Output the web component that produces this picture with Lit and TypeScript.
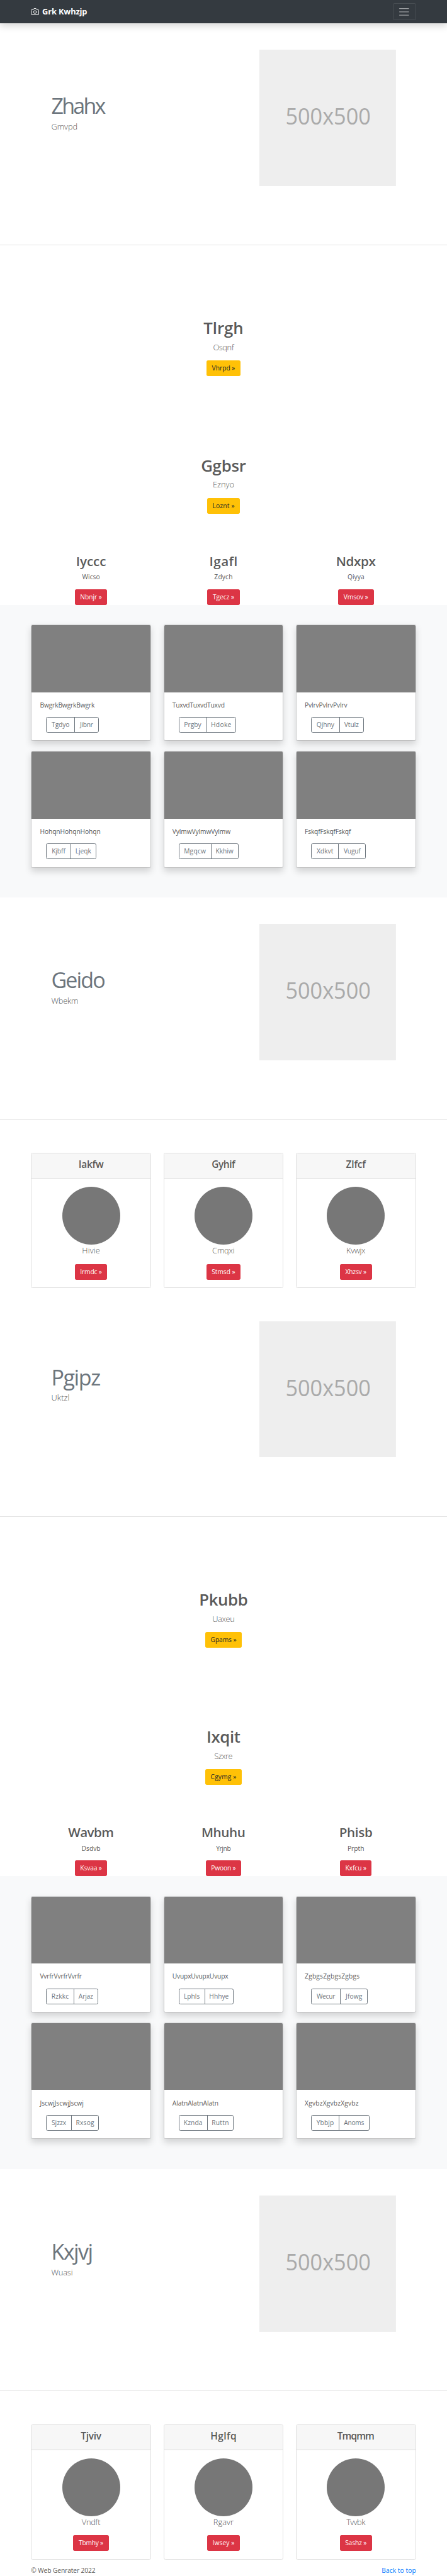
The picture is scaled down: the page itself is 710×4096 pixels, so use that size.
import { LitElement, html, css } from "lit";
import { customElement, property } from "lit/decorators.js";
import { styleMap } from "lit/directives/style-map.js";

type Sized = [label: string, width: number];

const w = (px: number) => styleMap({ width: `${px}px` });

/** Inline label whose tracking is adjusted so that its ink spans a set width. */
@customElement("fit-text")
export class FitText extends LitElement {
  @property() text = "";
  @property({ type: Number }) span = 0;

  static styles = css`
    :host { display: inline-block; white-space: nowrap; }
  `;

  protected updated() {
    const cs = getComputedStyle(this);
    const ctx = document.createElement("canvas").getContext("2d")!;
    ctx.font = `${cs.fontWeight} 100px ${cs.fontFamily}`;
    const m = ctx.measureText(this.text);
    const size = Number(cs.getPropertyValue("--size")) || 16;
    const ink = ((m.actualBoundingBoxRight + m.actualBoundingBoxLeft) * size) / 100;
    const tracking = (this.span - ink) / (this.text.length - 1) / size;
    this.style.letterSpacing = `${tracking}em`;
    this.style.marginRight = `${-tracking}em`;
  }

  render() {
    return html`${this.text}`;
  }
}

const fit = ([text, span]: Sized) => html`<fit-text .text=${text} .span=${span}></fit-text>`;

interface Item {
  title: Sized;
  text: Sized;
  btn: Sized;
}
interface Tile {
  text: Sized;
  first: Sized;
  second: string;
  total: number;
}
interface Block {
  heroes: { title: Sized; lead: Sized }[];
  jumbos: Item[];
  cols: Item[];
  album: Tile[];
  cards: Item[];
}

const item = (title: Sized, text: Sized, btn: Sized): Item => ({ title, text, btn });
const tile = (word: string, span: number, a: string, aw: number, second: string, total: number): Tile => ({
  text: [word.repeat(3), span],
  first: [a, aw],
  second,
  total,
});

const blocks: Block[] = [
  {
    heroes: [
      { title: ["Zhahx", 130], lead: ["Gmvpd", 60.6] },
      { title: ["Geido", 125.5], lead: ["Wbekm", 63.4] },
    ],
    jumbos: [
      item(["Tlrgh", 93], ["Osqnf", 50.3], ["Vhrpd »", 82.6]),
      item(["Ggbsr", 106.8], ["Eznyo", 49], ["Loznt »", 78.5]),
    ],
    cols: [
      item(["Iyccc", 69], ["Wicso", 42], ["Nbnjr »", 78]),
      item(["Igafl", 62.7], ["Zdych", 42.7], ["Tgecz »", 78.5]),
      item(["Ndxpx", 93], ["Qiyya", 38.6], ["Vmsov »", 86]),
    ],
    album: [
      tile("Bwgrk", 130.9, "Tgdyo", 68.5, "Jibnr", 127),
      tile("Tuxvd", 125.3, "Prgby", 66.5, "Hdoke", 139),
      tile("Pvlrv", 101.2, "Qjhny", 68, "Vtulz", 128),
      tile("Hohqn", 144, "Kjbff", 58.5, "Ljeqk", 121),
      tile("Vylmw", 140.5, "Mgqcw", 77.5, "Kkhiw", 144.5),
      tile("Fskqf", 110.9, "Xdkvt", 66, "Vuguf", 133),
    ],
    cards: [
      item(["Iakfw", 58.5], ["Hivie", 40.6], ["Irmdc »", 78]),
      item(["Gyhif", 57.2], ["Cmqxi", 51.7], ["Stmsd »", 82.6]),
      item(["Zlfcf", 48.2], ["Kvwjx", 44], ["Xhzsv »", 78]),
    ],
  },
  {
    heroes: [
      { title: ["Pgipz", 113], lead: ["Uktzl", 40.6] },
      { title: ["Kxjvj", 93], lead: ["Wuasi", 50] },
    ],
    jumbos: [
      item(["Pkubb", 113], ["Uaxeu", 51], ["Gpams »", 88]),
      item(["Ixqit", 77.8], ["Szxre", 42.7], ["Cgymg »", 88]),
    ],
    cols: [
      item(["Wavbm", 108], ["Dsdvb", 43.4], ["Ksvaa »", 78]),
      item(["Mhuhu", 101.2], ["Yrjnb", 35], ["Pwoon »", 85.4]),
      item(["Phisb", 76.5], ["Prpth", 37.9], ["Kxfcu »", 76.5]),
    ],
    album: [
      tile("Vvrfr", 101.2, "Rzkkc", 66, "Arjaz", 126),
      tile("Uvupx", 133.6, "Lphls", 62.5, "Hhhye", 133),
      tile("Zgbgs", 131.5, "Wecur", 70.5, "Jfowg", 137),
      tile("Jscwj", 106, "Sjzzx", 60, "Rxsog", 128),
      tile("Alatn", 110.2, "Kznda", 68.5, "Ruttn", 133),
      tile("Xgvbz", 129.5, "Ybbjp", 67, "Anoms", 141),
    ],
    cards: [
      item(["Tjviv", 49.6], ["Vndft", 44.8], ["Tbmhy »", 86]),
      item(["Hglfq", 59.2], ["Rgavr", 46.8], ["Iwsey »", 78.5]),
      item(["Tmqmm", 88.2], ["Tvvbk", 46.1], ["Sashz »", 78]),
    ],
  },
];

@customElement("app-root")
export class AppRoot extends LitElement {
  static styles = css`
    :host {
      display: block;
      background: #fff;
      color: #5a5a5a;
      font-family: "Open Sans", "Noto Sans", sans-serif;
    }
    * { box-sizing: border-box; }
    h1, h2, h4, p { margin: 0; }
    .page { zoom: 0.6573; --size: 15.6; line-height: 24px; }
    .page, .page * { font-size: calc(var(--size) * 1px); }
    .nav {
      position: relative;
      display: flex;
      justify-content: space-between;
      align-items: center;
      height: 56px;
      padding: 0 75px;
      background: #343a40;
      box-shadow: 0 8px 16px rgba(0, 0, 0, 0.15);
    }
    .brand {
      --size: 19.6;
      display: flex;
      align-items: center;
      gap: 7px;
      color: #fff;
      font-weight: 700;
      line-height: 30px;
    }
    .brand svg { display: block; }
    .toggler {
      width: 56px;
      height: 40px;
      display: grid;
      place-items: center;
      border: 1px solid rgba(255, 255, 255, 0.1);
      border-radius: 4px;
    }
    .toggler svg { display: block; }
    .hero {
      display: flex;
      justify-content: space-between;
      align-items: flex-start;
      height: 538px;
      padding: 64px 124px 0;
      border-bottom: 1px solid #e1e1e1;
    }
    .hero-text { padding-top: 105.4px; color: #6c757d; }
    .hero-title { --size: 51.8; font-weight: 400; line-height: 63.4px; margin-bottom: 3px; }
    .lead { --size: 19.6; font-weight: 300; line-height: 30px; }
    .hero-text .lead { color: #5a5a5a; }
    .ph { display: block; width: 330px; height: 330px; }
    .page .ph text { font-size: 56px; }
    .jumbos { padding-top: 176.4px; }
    .jumbo { display: flex; flex-direction: column; align-items: center; padding-bottom: 192px; }
    .jumbo:last-child { padding-bottom: 96.2px; }
    .jumbo-title { --size: 39.2; font-weight: 600; line-height: 48px; margin-bottom: 8px; }
    .jumbo .lead { margin-bottom: 16px; }
    .btn {
      height: 38px;
      line-height: 38px;
      border-radius: 4px;
      text-align: center;
      white-space: nowrap;
    }
    .warn { background: #ffc107; color: #212529; }
    .danger { background: #dc3545; color: #fff; }
    .row { display: grid; grid-template-columns: repeat(3, 290px); column-gap: 30px; padding: 0 75px; }
    .col { display: flex; flex-direction: column; align-items: center; }
    .col-title { --size: 31.4; font-weight: 600; line-height: 38.4px; margin-bottom: 8px; }
    .col p { margin-bottom: 16px; }
    .album { background: #f8f9fa; padding: 48px 75px 72px; row-gap: 24px; height: 708px; }
    .tile {
      height: 282px;
      background: #fff;
      border: 1px solid rgba(0, 0, 0, 0.125);
      background-clip: padding-box;
      border-radius: 4px;
      box-shadow: 0 8px 16px rgba(0, 0, 0, 0.15);
      overflow: hidden;
    }
    .thumb { height: 162px; background: #808080; }
    .tile-body { padding: 20px; }
    .tile-text { margin-bottom: 16px; }
    .group {
      display: flex;
      height: 38px;
      margin-left: 15px;
      border: 1px solid #6c757d;
      border-radius: 4px;
      color: #6c757d;
      line-height: 36px;
      text-align: center;
      white-space: nowrap;
    }
    .group .first { border-right: 1px solid #6c757d; flex: none; }
    .group .second { flex: 1; }
    .cards { padding-top: 80px; padding-bottom: 16px; }
    .card { height: 327px; border: 1px solid #dfdfdf; border-radius: 4px; overflow: hidden; text-align: center; }
    .card-head { height: 61px; padding-top: 12px; background: #f7f7f7; border-bottom: 1px solid #dcdcdc; }
    .card-title { --size: 23.6; font-weight: 600; line-height: 28.8px; }
    .card-body { display: flex; flex-direction: column; align-items: center; padding-top: 20px; }
    .avatar { width: 140px; height: 140px; border-radius: 50%; background: #777; }
    .card .lead { margin-bottom: 16px; }
    .footer { display: flex; justify-content: space-between; height: 22px; padding: 0 75px; }
    .top-link { color: #007bff; }
  `;

  private button([label, width]: Sized, kind: string) {
    return html`<div class="btn ${kind}" style=${w(width)}>${fit([label, width - 27.2])}</div>`;
  }

  private hero(h: { title: Sized; lead: Sized }) {
    return html`<section class="hero">
      <div class="hero-text">
        <h1 class="hero-title">${fit(h.title)}</h1>
        <p class="lead">${fit(h.lead)}</p>
      </div>
      <svg class="ph" viewBox="0 0 330 330">
        <rect width="330" height="330" fill="#eee" />
        <text x="63" y="181.5" fill="#aaa" textLength="206" lengthAdjust="spacingAndGlyphs">500x500</text>
      </svg>
    </section>`;
  }

  private block(b: Block) {
    return html`
      ${this.hero(b.heroes[0])}
      <section class="jumbos">
        ${b.jumbos.map(
          (j) => html`<div class="jumbo">
            <h1 class="jumbo-title">${fit(j.title)}</h1>
            <p class="lead">${fit(j.text)}</p>
            ${this.button(j.btn, "warn")}
          </div>`
        )}
      </section>
      <section class="row">
        ${b.cols.map(
          (c) => html`<div class="col">
            <h2 class="col-title">${fit(c.title)}</h2>
            <p>${fit(c.text)}</p>
            ${this.button(c.btn, "danger")}
          </div>`
        )}
      </section>
      <section class="row album">
        ${b.album.map(
          (t) => html`<div class="tile">
            <div class="thumb"></div>
            <div class="tile-body">
              <p class="tile-text">${fit(t.text)}</p>
              <div class="group" style=${w(t.total)}>
                <span class="first" style=${w(t.first[1])}>${fit([t.first[0], t.first[1] - 26])}</span>
                <span class="second">${fit([t.second, t.total - t.first[1] - 25.5])}</span>
              </div>
            </div>
          </div>`
        )}
      </section>
      ${this.hero(b.heroes[1])}
      <section class="row cards">
        ${b.cards.map(
          (c) => html`<div class="card">
            <div class="card-head"><h4 class="card-title">${fit(c.title)}</h4></div>
            <div class="card-body">
              <div class="avatar"></div>
              <p class="lead">${fit(c.text)}</p>
              ${this.button(c.btn, "danger")}
            </div>
          </div>`
        )}
      </section>
    `;
  }

  render() {
    return html`<div class="page">
      <header class="nav">
        <div class="brand">
          <svg width="20" height="20" viewBox="0 0 24 24" fill="none" stroke="#fff" stroke-width="1.8" stroke-linecap="round" stroke-linejoin="round">
            <path d="M23 19a2 2 0 0 1-2 2H3a2 2 0 0 1-2-2V8a2 2 0 0 1 2-2h4l2-3h6l2 3h4a2 2 0 0 1 2 2z" />
            <circle cx="12" cy="13" r="4" />
          </svg>
          ${fit(["Grk Kwhzjp", 107])}
        </div>
        <div class="toggler">
          <svg width="30" height="30" viewBox="0 0 30 30" stroke="rgba(255,255,255,0.5)" stroke-width="2" stroke-linecap="round" stroke-miterlimit="10">
            <path d="M4 7h22M4 15h22M4 23h22" />
          </svg>
        </div>
      </header>
      ${blocks.map((b) => this.block(b))}
      <footer class="footer">
        <span>${fit(["© Web Genrater 2022", 154.3])}</span>
        <span class="top-link">${fit(["Back to top", 80.6])}</span>
      </footer>
    </div>`;
  }
}
